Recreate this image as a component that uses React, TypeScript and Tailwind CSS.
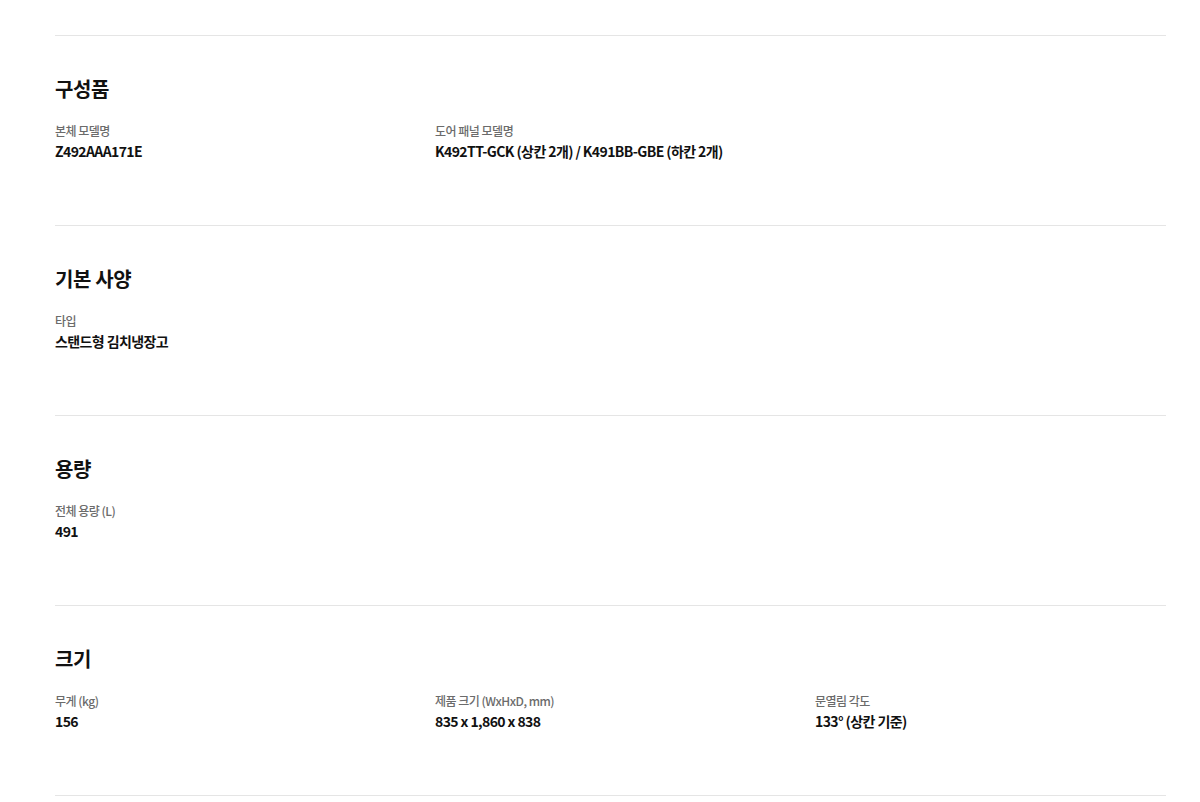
import React from "react";

type Spec = { label: string; value: string };

const sections: { title: string; items: Spec[] }[] = [
  {
    title: "구성품",
    items: [
      { label: "본체 모델명", value: "Z492AAA171E" },
      { label: "도어 패널 모델명", value: "K492TT-GCK (상칸 2개) / K491BB-GBE (하칸 2개)" },
    ],
  },
  {
    title: "기본 사양",
    items: [{ label: "타입", value: "스탠드형 김치냉장고" }],
  },
  {
    title: "용량",
    items: [{ label: "전체 용량 (L)", value: "491" }],
  },
  {
    title: "크기",
    items: [
      { label: "무게 (kg)", value: "156" },
      { label: "제품 크기 (WxHxD, mm)", value: "835 x 1,860 x 838" },
      { label: "문열림 각도", value: "133° (상칸 기준)" },
    ],
  },
];

export default function App() {
  return (
    <main
      className="min-h-screen bg-white pt-[35px]"
      style={{ fontFamily: '"Noto Sans CJK KR", "Noto Sans", sans-serif' }}
    >
      <div className="ml-[55px] w-[1111px] border-b border-[#e5e5e5]">
        {sections.map((section) => (
          <section
            key={section.title}
            className="border-t border-[#e5e5e5] pt-[39px] pb-[64px]"
          >
            <h2 className="text-[20px] leading-[28px] font-bold tracking-[-0.4px] text-[#111]">
              {section.title}
            </h2>
            <div className="mt-[19px] grid grid-cols-[380px_380px_1fr]">
              {section.items.map((item) => (
                <div key={item.label}>
                  <p className="text-[12px] leading-[18px] font-medium tracking-[-0.5px] text-[#6b6b6b]">
                    {item.label}
                  </p>
                  <p className="mt-[1px] text-[14px] leading-[20px] font-bold tracking-[-0.6px] text-[#111]">
                    {item.value}
                  </p>
                </div>
              ))}
            </div>
          </section>
        ))}
      </div>
    </main>
  );
}
